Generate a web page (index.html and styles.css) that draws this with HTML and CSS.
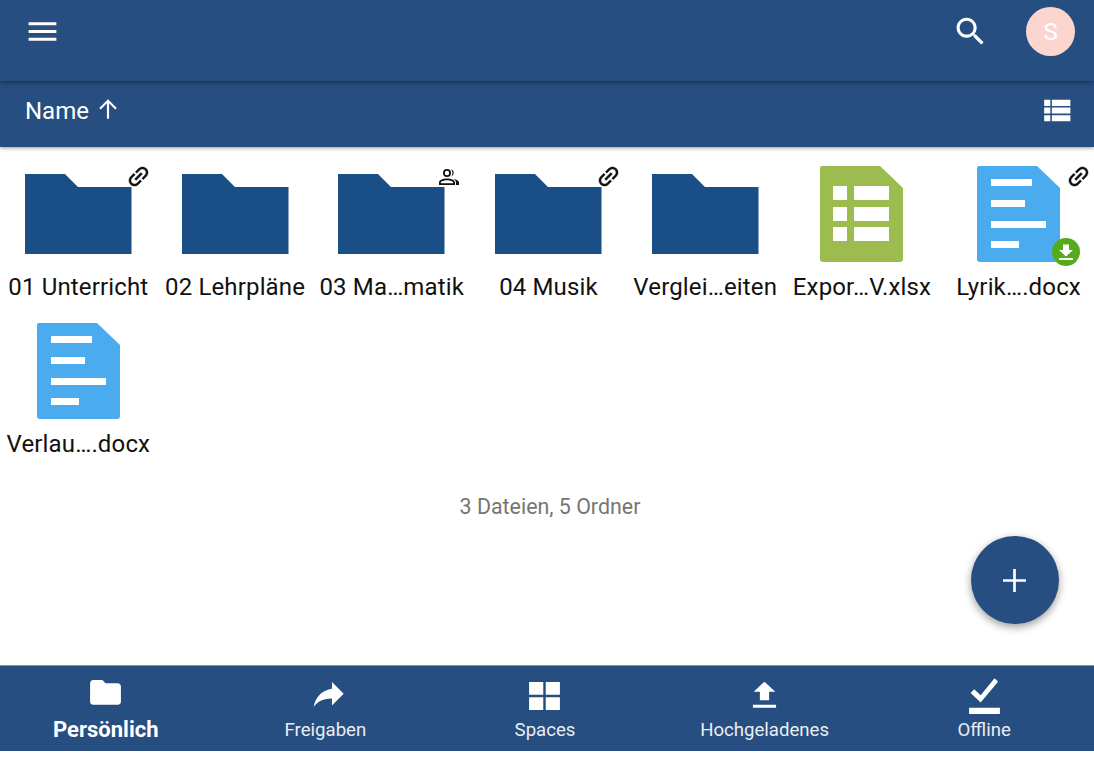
FILE: index.html
```html
<!DOCTYPE html>
<html lang="de">
<head>
  <meta charset="UTF-8" />
  <meta name="viewport" content="width=device-width, initial-scale=1.0"/>
  <title>Persönlich</title>
  <link rel="stylesheet" href="styles.css">
</head>
<body>

<svg class="defs" width="0" height="0" aria-hidden="true">
  <defs>
    <path id="linkShape" d="M3.900 12c0-1.710 1.390-3.100 3.100-3.100h4V7H7c-2.760 0-5 2.240-5 5s2.240 5 5 5h4v-1.900H7c-1.710 0-3.100-1.390-3.100-3.100zM8 13h8v-2H8v2zm9-6h-4v1.900h4c1.710 0 3.100 1.390 3.100 3.100s-1.390 3.100-3.100 3.100h-4V17h4c2.760 0 5-2.240 5-5s-2.240-5-5-5z"/>
    <path id="folderShape" d="M0 8H40L53 21H106.500V88H0Z"/>
    <path id="docShape" d="M2 0H60L83 22V93Q83 96 80 96H3Q0 96 0 93V2Q0 0 2 0Z"/>
  </defs>
</svg>

<div class="app">

  <!-- Top bar -->
  <header class="topbar">
    <svg class="icon menu-icon" viewBox="0 0 24 24"><path d="M3 18h18v-2H3v2zm0-5h18v-2H3v2zm0-7v2h18V6H3z"/></svg>
    <div class="topbar-right">
      <svg class="icon search-icon" viewBox="0 0 24 24"><path d="M15.500 14h-.79l-.28-.27C15.410 12.590 16 11.110 16 9.500 16 5.910 13.090 3 9.500 3S3 5.910 3 9.500 5.910 16 9.500 16c1.610 0 3.090-.59 4.230-1.570l.27.28v.79l5 4.990L20.490 19l-4.990-5zm-6 0C7.010 14 5 11.990 5 9.500S7.010 5 9.500 5 14 7.010 14 9.500 11.990 14 9.500 14z"/></svg>
      <div class="avatar">S</div>
    </div>
  </header>

  <!-- Sort bar -->
  <div class="sortbar">
    <div class="sort-label">
      <span>Name</span>
      <svg class="sort-arrow" viewBox="0 0 22 22"><path d="M11 2 3 10l1.400 1.400 5.600-5.600V20h2V5.800l5.600 5.600L19 10z"/></svg>
    </div>
    <svg class="icon list-icon" viewBox="0 0 24 24"><path d="M4 14h4v-4H4v4zm0 5h4v-4H4v4zM4 9h4V5H4v4zm5 5h12v-4H9v4zm0 5h12v-4H9v4zM9 5v4h12V5H9z"/></svg>
  </div>

  <main class="content">
    <div class="file-grid">

      <div class="file-cell">
        <div class="thumb">
          <svg class="thumb-svg" viewBox="0 0 107 96"><use href="#folderShape" class="folder-fill"/></svg>
          <svg class="badge-link" viewBox="0 0 24 24"><use href="#linkShape"/></svg>
        </div>
        <div class="file-name">01 Unterricht</div>
      </div>

      <div class="file-cell">
        <div class="thumb">
          <svg class="thumb-svg" viewBox="0 0 107 96"><use href="#folderShape" class="folder-fill"/></svg>
        </div>
        <div class="file-name">02 Lehrpläne</div>
      </div>

      <div class="file-cell">
        <div class="thumb">
          <svg class="thumb-svg" viewBox="0 0 107 96"><use href="#folderShape" class="folder-fill"/></svg>
          <svg class="badge-people" viewBox="0 0 22 18">
            <path d="M9 1a4 4 0 1 0 0 8 4 4 0 0 0 0-8zm0 1.800a2.200 2.200 0 1 1 0 4.400 2.200 2.200 0 0 1 0-4.400zM9 10.500c-3.500 0-8 1.400-8 4V17h16v-2.500c0-2.600-4.500-4-8-4zm0 1.700c3 0 6.200 1.200 6.200 2.300v.8H2.800v-.8c0-1.100 3.200-2.300 6.200-2.300z"/>
            <path d="M13 1.200a4 4 0 0 1 0 7.600 5.500 5.500 0 0 0 0-7.600zM15.500 10.900c2.600.5 5.500 1.700 5.500 3.600V17h-3v-2.500c0-1.500-1-2.700-2.500-3.600z"/>
          </svg>
        </div>
        <div class="file-name">03 Ma…matik</div>
      </div>

      <div class="file-cell">
        <div class="thumb">
          <svg class="thumb-svg" viewBox="0 0 107 96"><use href="#folderShape" class="folder-fill"/></svg>
          <svg class="badge-link" viewBox="0 0 24 24"><use href="#linkShape"/></svg>
        </div>
        <div class="file-name">04 Musik</div>
      </div>

      <div class="file-cell">
        <div class="thumb">
          <svg class="thumb-svg" viewBox="0 0 107 96"><use href="#folderShape" class="folder-fill"/></svg>
        </div>
        <div class="file-name">Verglei…eiten</div>
      </div>

      <div class="file-cell">
        <div class="thumb">
          <svg class="doc-svg" viewBox="0 0 83 96">
            <use href="#docShape" class="sheet-fill"/>
            <path class="white-fill" d="M13 20h14v14H13zM34 20h35v14H34zM13 41h14v14H13zM34 41h35v14H34zM13 61h14v14H13zM34 61h35v14H34z"/>
          </svg>
        </div>
        <div class="file-name">Expor…V.xlsx</div>
      </div>

      <div class="file-cell">
        <div class="thumb">
          <svg class="doc-svg" viewBox="0 0 83 96">
            <use href="#docShape" class="doc-fill"/>
            <path class="white-fill" d="M14 13h41v7H14zM14 34h34v7H14zM14 55h55v7H14zM14 75h28v7H14z"/>
          </svg>
          <svg class="badge-link" viewBox="0 0 24 24"><use href="#linkShape"/></svg>
          <svg class="badge-offline" viewBox="0 0 28 28">
            <circle cx="14" cy="14" r="14" fill="#55ab1c"/>
            <path fill="#fff" d="M11 6.500h6V12h4l-7 6.500L7 12h4zM7 20h14v2H7z"/>
          </svg>
        </div>
        <div class="file-name">Lyrik….docx</div>
      </div>

      <div class="file-cell">
        <div class="thumb">
          <svg class="doc-svg" viewBox="0 0 83 96">
            <use href="#docShape" class="doc-fill"/>
            <path class="white-fill" d="M14 13h41v7H14zM14 34h34v7H14zM14 55h55v7H14zM14 75h28v7H14z"/>
          </svg>
        </div>
        <div class="file-name">Verlau….docx</div>
      </div>

    </div>

    <div class="file-count">3 Dateien, 5 Ordner</div>

    <button class="fab">
      <svg viewBox="0 0 24 24"><path d="M10.600 0h2.800v10.600H24v2.800H13.400V24h-2.800V13.400H0v-2.800h10.600z"/></svg>
    </button>
  </main>

  <!-- Bottom navigation -->
  <nav class="bottomnav">
    <div class="nav-item active">
      <svg class="nav-icon" viewBox="0 0 24 24"><path d="M10 2H4c-1.100 0-1.990.9-1.990 2L2 16c0 1.100.9 2 2 2h16c1.100 0 2-.9 2-2V6c0-1.100-.9-2-2-2h-8l-2-2z"/></svg>
      <span>Persönlich</span>
    </div>
    <div class="nav-item">
      <svg class="nav-icon" viewBox="0 0 24 24"><path transform="translate(1 -2.200) scale(1.085)" d="M14 9V5l7 7-7 7v-4.100c-5 0-8.500 1.600-11 5.100 1-5 4-10 11-11z"/></svg>
      <span>Freigaben</span>
    </div>
    <div class="nav-item">
      <svg class="nav-icon" viewBox="0 0 24 24"><path d="M2 3.200h9.200v8.300H2zM12.800 3.200H22v8.300h-9.200zM2 13.200h9.200v8.200H2zM12.800 13.200H22v8.200h-9.200z"/></svg>
      <span>Spaces</span>
    </div>
    <div class="nav-item">
      <svg class="nav-icon" viewBox="0 0 24 24"><path d="M9 15h6V9.500h4L12 3 5 9.500h4zM4.500 18h15v2h-15z"/></svg>
      <span>Hochgeladenes</span>
    </div>
    <div class="nav-item">
      <svg class="nav-icon" viewBox="0 0 24 24"><path d="M9.500 16.500 3 10.300l2.300-2.300 4.200 3.900L18.500.8l2.300 2.300zM2 20h20v4H2z"/></svg>
      <span>Offline</span>
    </div>
  </nav>

</div>

</body>
</html>
```

FILE: styles.css
```css
html, body {
  margin: 0;
  padding: 0;
  height: 100%;
  overflow: hidden;
  background: #fff;
  font-family: Roboto, 'Liberation Sans', sans-serif;
}

.defs {
  position: absolute;
}

.app {
  height: 751px;
  display: flex;
  flex-direction: column;
}

.icon {
  display: block;
  fill: #fff;
}

/* Top bar */
.topbar {
  height: 81px;
  flex: none;
  display: flex;
  justify-content: space-between;
  align-items: flex-start;
  background: #274e80;
  box-shadow: 0 1px 5px rgba(0, 0, 0, 0.45);
  position: relative;
  z-index: 2;
  padding: 0 19px 0 24px;
  box-sizing: border-box;
}

.menu-icon {
  width: 37px;
  height: 37px;
  margin-top: 13px;
}

.topbar-right {
  display: flex;
  align-items: flex-start;
  gap: 37px;
}

.search-icon {
  width: 37px;
  height: 37px;
  margin-top: 13px;
}

.avatar {
  width: 49px;
  height: 49px;
  margin-top: 7px;
  border-radius: 50%;
  background: #fdd5cf;
  color: #fff;
  font-size: 24px;
  display: flex;
  align-items: center;
  justify-content: center;
}

/* Sort bar */
.sortbar {
  height: 66px;
  flex: none;
  display: flex;
  justify-content: space-between;
  align-items: center;
  background: #274e80;
  box-shadow: 0 1px 4px rgba(0, 0, 0, 0.4);
  position: relative;
  z-index: 1;
  padding: 0 19px 7px 25px;
  box-sizing: border-box;
  color: #fff;
}

.sort-label {
  display: flex;
  align-items: center;
  gap: 7px;
  font-size: 24px;
}

.sort-arrow {
  width: 24px;
  height: 24px;
  fill: #fff;
  margin-bottom: 3px;
}

.list-icon {
  width: 37px;
  height: 37px;
}

/* Files */
.content {
  flex: 1;
  position: relative;
  padding-top: 19px;
}

.file-grid {
  display: grid;
  grid-template-columns: repeat(7, 1fr);
  row-gap: 22px;
  margin-right: -3px;
}

.file-cell {
  display: flex;
  flex-direction: column;
  align-items: center;
}

.thumb {
  width: 107px;
  height: 96px;
  position: relative;
  display: flex;
  justify-content: center;
}

.thumb-svg {
  width: 107px;
  height: 96px;
  display: block;
}

.doc-svg {
  width: 83px;
  height: 96px;
  display: block;
}

.folder-fill {
  fill: #194f86;
}

.sheet-fill {
  fill: #9dbc4f;
}

.doc-fill {
  fill: #4aabee;
}

.white-fill {
  fill: #fff;
}

.badge-link {
  position: absolute;
  top: -3px;
  right: -20px;
  width: 27px;
  height: 27px;
  transform: rotate(-45deg);
  fill: #111;
  stroke: #111;
  stroke-width: 0.3;
}

.badge-people {
  position: absolute;
  top: 2px;
  right: -15px;
  width: 22px;
  height: 18px;
  fill: #111;
}

.badge-offline {
  position: absolute;
  top: 72px;
  right: -8px;
  width: 28px;
  height: 28px;
}

.file-name {
  margin-top: 11px;
  font-size: 24px;
  line-height: 28px;
  letter-spacing: 0.15px;
  color: #111;
  white-space: nowrap;
}

.file-count {
  margin-top: 37px;
  text-align: center;
  font-size: 21.4px;
  line-height: 24px;
  color: #757575;
  padding-left: 6px;
}

.fab {
  position: absolute;
  right: 35px;
  bottom: 41px;
  width: 88px;
  height: 88px;
  border: none;
  border-radius: 50%;
  background: #274e80;
  box-shadow: 0 3px 8px rgba(0, 0, 0, 0.4);
  display: flex;
  align-items: center;
  justify-content: center;
  padding: 0;
}

.fab svg {
  width: 23px;
  height: 23px;
  margin-right: 2px;
  fill: #fff;
}

/* Bottom navigation */
.bottomnav {
  height: 86px;
  flex: none;
  display: grid;
  grid-template-columns: repeat(5, 1fr);
  margin-left: -4px;
  background: #274e80;
  border-top: 1px solid #7c94b3;
  box-sizing: border-box;
  color: #e9edf3;
}

.nav-item {
  display: flex;
  flex-direction: column;
  align-items: center;
  font-size: 18.6px;
  line-height: 24px;
  padding-top: 11px;
}

.nav-item span {
  margin-top: 4px;
}

.nav-item.active {
  color: #fff;
  font-size: 22px;
  font-weight: 700;
}

.nav-icon {
  width: 37px;
  height: 37px;
  display: block;
  fill: #fff;
}
```
